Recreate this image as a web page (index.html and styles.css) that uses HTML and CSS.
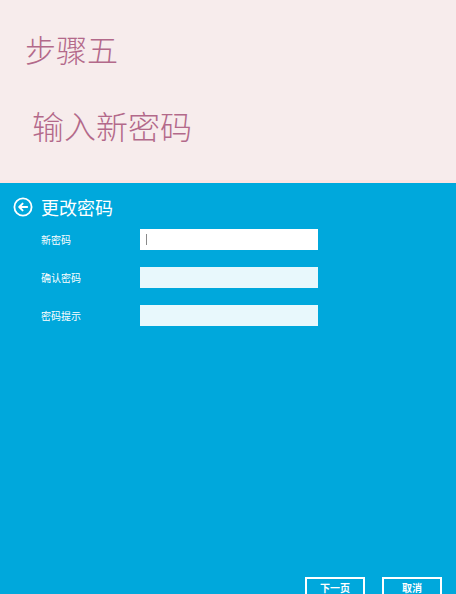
FILE: index.html
```html
<!DOCTYPE html>
<html lang="zh-CN">
<head>
<meta charset="utf-8">
<link rel="stylesheet" href="styles.css">
</head>
<body>
<div class="page">
  <section class="intro">
    <div class="step">步骤五</div>
    <div class="headline">输入新密码</div>
  </section>
  <section class="panel">
    <div class="panel-head">
      <svg class="back" width="20" height="20" viewBox="0 0 20 20">
        <circle cx="10" cy="10" r="8.6" fill="none" stroke="#fff" stroke-width="1.8"/>
        <path d="M14.2 10H6.4M9.6 6.6L6.2 10l3.4 3.4" fill="none" stroke="#fff" stroke-width="1.9" stroke-linecap="round" stroke-linejoin="round"/>
      </svg>
      <span class="panel-title">更改密码</span>
    </div>
    <div class="form">
      <div class="row">
        <span class="label">新密码</span>
        <div class="field field-active"><span class="caret"></span></div>
      </div>
      <div class="row">
        <span class="label">确认密码</span>
        <div class="field"></div>
      </div>
      <div class="row">
        <span class="label">密码提示</span>
        <div class="field"></div>
      </div>
    </div>
    <div class="actions">
      <div class="btn">下一页</div>
      <div class="btn">取消</div>
    </div>
  </section>
</div>
</body>
</html>
```

FILE: styles.css
```css
html, body {
  margin: 0;
  padding: 0;
  height: 594px;
  overflow: hidden;
}
body {
  font-family: "Noto Sans CJK SC", "Noto Sans", sans-serif;
}
.page {
  display: flex;
  flex-direction: column;
  width: 456px;
  height: 594px;
}
.intro {
  height: 180px;
  background: #f7ecec;
  border-bottom: 3px solid #fde3e2;
  color: #b3698a;
  font-weight: 300;
  box-sizing: border-box;
  height: 183px;
}
.step {
  font-size: 31px;
  line-height: 31px;
  padding: 33px 0 0 25px;
}
.headline {
  font-size: 32px;
  line-height: 32px;
  padding: 45px 0 0 32px;
}
.panel {
  flex: 1;
  background: #00a8dc;
  display: flex;
  flex-direction: column;
  overflow: hidden;
  color: #fff;
}
.panel-head {
  display: flex;
  align-items: center;
  height: 24px;
  margin-top: 12px;
  padding-left: 13px;
}
.back {
  display: block;
  margin-right: 8px;
}
.panel-title {
  font-size: 18px;
  line-height: 24px;
}
.form {
  display: flex;
  flex-direction: column;
  gap: 17px;
  margin-top: 10px;
}
.row {
  display: flex;
  align-items: center;
  height: 21px;
}
.label {
  width: 99px;
  padding-left: 41px;
  font-size: 10px;
}
.field {
  width: 178px;
  height: 21px;
  background: #e8f8fc;
  box-sizing: border-box;
}
.field-active {
  background: #ffffff;
  display: flex;
  align-items: center;
  padding-left: 6px;
}
.caret {
  width: 1px;
  height: 11px;
  background: #8a8a8a;
}
.actions {
  margin-top: auto;
  display: flex;
  justify-content: flex-end;
  gap: 17px;
  padding-right: 14px;
  margin-bottom: -6px;
}
.btn {
  width: 60px;
  height: 23px;
  box-sizing: border-box;
  border: 2px solid #fff;
  font-size: 10px;
  font-weight: 700;
  line-height: 17px;
  text-align: center;
  color: #fff;
}
```
